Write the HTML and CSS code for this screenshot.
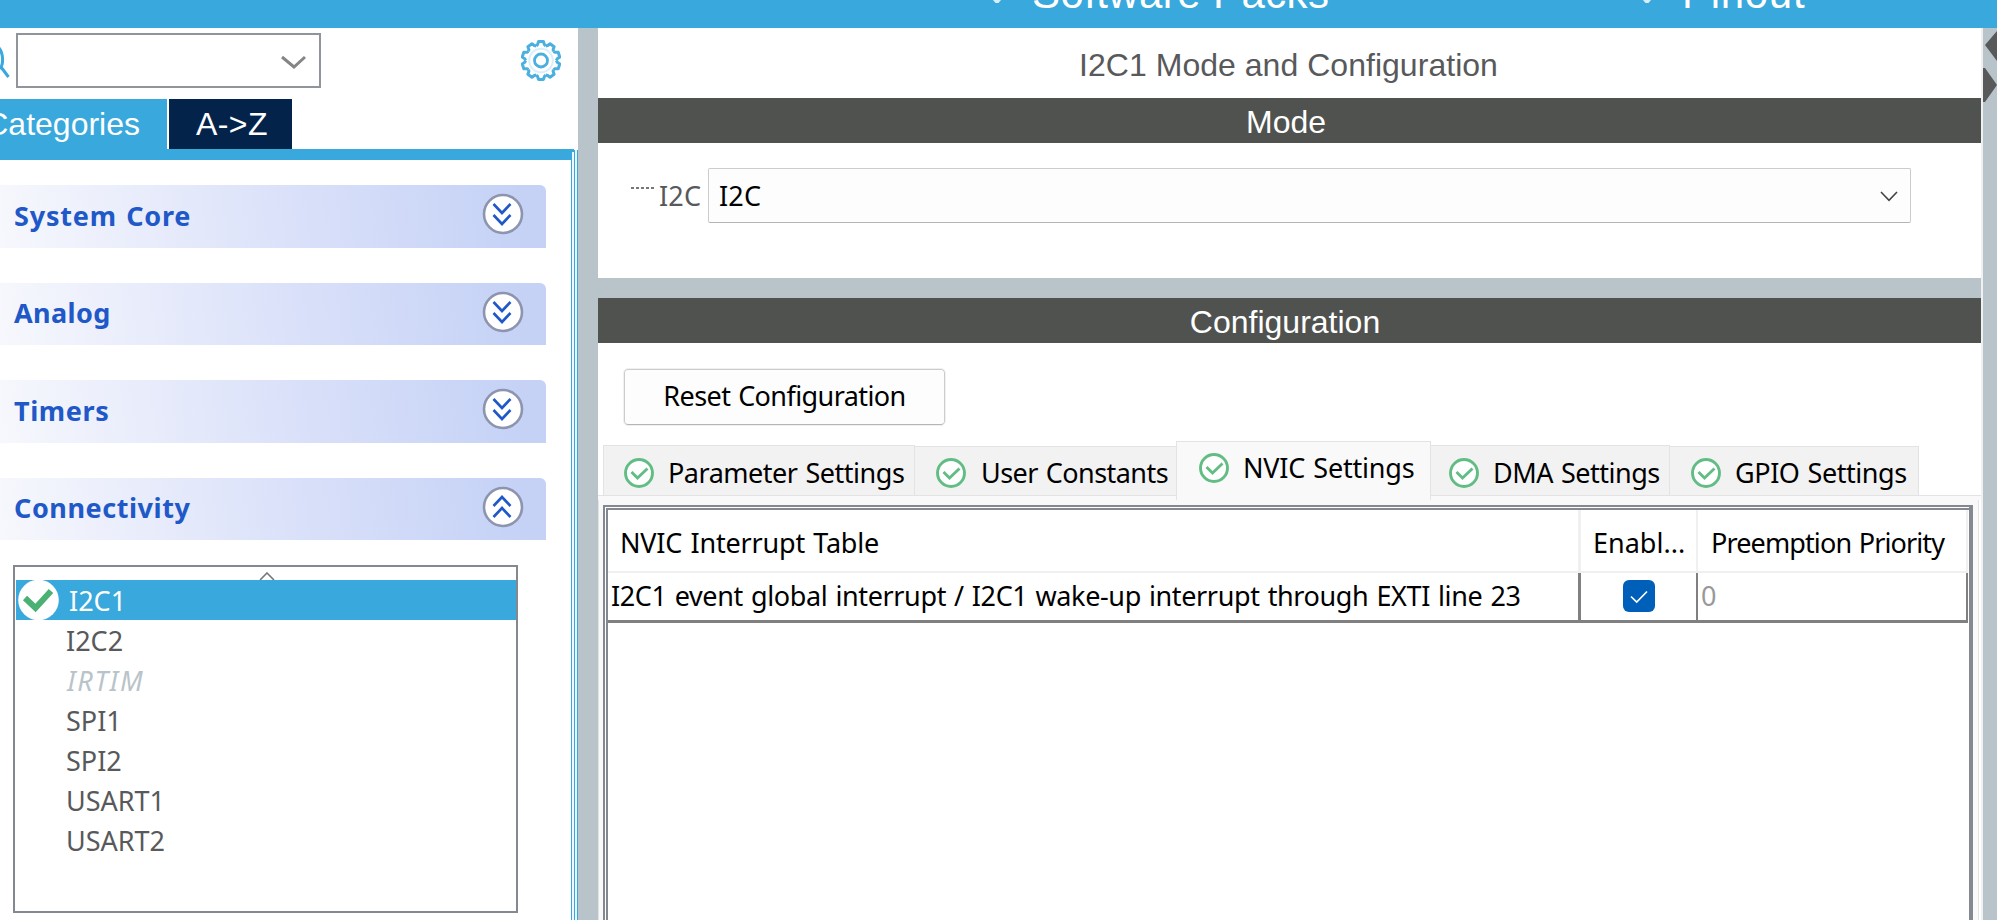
FILE: index.html
```html
<!DOCTYPE html>
<html lang="en">
<head>
<meta charset="utf-8">
<title>I2C1 Mode and Configuration</title>
<link rel="stylesheet" href="styles.css">
</head>
<body>
<svg class="defs" width="0" height="0">
  <symbol id="ok" viewBox="0 0 30 30">
    <circle cx="15" cy="15" r="13.5" fill="#fff" stroke="#62bd85" stroke-width="2.9"/>
    <path d="M7.5 14 L13.5 20 L23.5 10.5" fill="none" stroke="#62bd85" stroke-width="2.9"/>
  </symbol>
  <symbol id="down" viewBox="0 0 42 42">
    <circle cx="21" cy="21" r="19" fill="#fff" stroke="#8d94ae" stroke-width="2.6"/>
    <path d="M11.5 11 L20 20 L28.5 11 M11.5 22 L20 31 L28.5 22" fill="none" stroke="#2058c8" stroke-width="2.6"/>
  </symbol>
  <symbol id="up" viewBox="0 0 42 42">
    <circle cx="21" cy="21" r="19" fill="#fff" stroke="#8d94ae" stroke-width="2.6"/>
    <path d="M11.5 20 L20 11 L28.5 20 M11.5 31 L20 22 L28.5 31" fill="none" stroke="#2058c8" stroke-width="2.6"/>
  </symbol>
</svg>
<header class="menu">
  <div class="menu-item packs"><svg class="menu-tick" viewBox="0 0 8 4"><path d="M0 0 H8 L5.5 3 H2.5 Z" fill="#d9eef8"/></svg><span>Software Packs</span></div>
  <div class="menu-item pinout"><svg class="menu-tick" viewBox="0 0 8 4"><path d="M0 0 H8 L5.5 3 H2.5 Z" fill="#d9eef8"/></svg><span>Pinout</span></div>
</header>
<main class="body">
  <aside class="side">
    <div class="search">
      <svg class="lens" viewBox="0 0 10 40"><path d="M-1 5 C3.6 11 3.6 21 0 26 M1 24 L8.5 34" fill="none" stroke="#39a8dc" stroke-width="3"/></svg>
      <div class="search-box"><svg viewBox="0 0 26 14" class="search-chev"><path d="M2 2 L14 12 L25 2" fill="none" stroke="#858585" stroke-width="3"/></svg></div>
      <svg class="gear" viewBox="-20 -20.5 40 41" fill="none" stroke="#4bb0df">
        <g stroke-width="3" stroke-linejoin="round">
          <path id="tooth" d="M-4.73 -14.55 L-3.4 -16 L-2.5 -18.9 H2.5 L3.4 -16 L4.73 -14.55"/>
          <use href="#tooth" transform="rotate(36)"/><use href="#tooth" transform="rotate(72)"/><use href="#tooth" transform="rotate(108)"/>
          <use href="#tooth" transform="rotate(144)"/><use href="#tooth" transform="rotate(180)"/><use href="#tooth" transform="rotate(216)"/>
          <use href="#tooth" transform="rotate(252)"/><use href="#tooth" transform="rotate(288)"/><use href="#tooth" transform="rotate(324)"/>
        </g>
        <circle r="11.8" stroke-width="2" opacity=".2"/><circle r="6.5" stroke-width="2.8"/>
      </svg>
    </div>
    <nav class="modes"><div class="mode on"><span>Categories</span></div><div class="mode az"><span>A-&gt;Z</span></div></nav>
    <section class="cats">
      <div class="cat odd"><span class="t-sc">System Core</span><svg class="cat-ico"><use href="#down"/></svg></div>
      <div class="cat"><span class="t-an">Analog</span><svg class="cat-ico"><use href="#down"/></svg></div>
      <div class="cat odd"><span class="t-ti">Timers</span><svg class="cat-ico"><use href="#down"/></svg></div>
      <div class="cat"><span class="t-co">Connectivity</span><svg class="cat-ico"><use href="#up"/></svg></div>
      <div class="list">
        <div class="list-top"><svg viewBox="0 0 16 8"><path d="M1 8 L8 1 L15 8" fill="none" stroke="#777" stroke-width="1.6"/></svg></div>
        <div class="row sel"><svg class="row-ico" viewBox="0 0 41 40"><circle cx="20.5" cy="20" r="20.3" fill="#fff"/><path d="M7 18 L17.5 28 L33 11" fill="none" stroke="#4ab173" stroke-width="6"/></svg><span>I2C1</span></div>
        <div class="row"><span>I2C2</span></div>
        <div class="row off"><span>IRTIM</span></div>
        <div class="row"><span>SPI1</span></div>
        <div class="row"><span>SPI2</span></div>
        <div class="row"><span>USART1</span></div>
        <div class="row"><span>USART2</span></div>
      </div>
    </section>
  </aside>
  <section class="main">
    <h1 class="title"><span>I2C1 Mode and Configuration</span></h1>
    <h2 class="bar"><span>Mode</span></h2>
    <div class="mode-body">
      <span class="dots"></span><label class="lbl">I2C</label>
      <div class="select"><span>I2C</span><svg viewBox="0 0 18 11"><path d="M1 1 L9 9.3 L17 1" fill="none" stroke="#444" stroke-width="1.6"/></svg></div>
    </div>
    <h2 class="bar second"><span>Configuration</span></h2>
    <div class="tools"><button class="reset"><span>Reset Configuration</span></button></div>
    <div class="tabs">
      <div class="tab t1"><svg><use href="#ok"/></svg><span>Parameter Settings</span></div>
      <div class="tab t2 low"><svg><use href="#ok"/></svg><span>User Constants</span></div>
      <div class="tab t3"><svg><use href="#ok"/></svg><span>NVIC Settings</span></div>
      <div class="tab t4"><svg><use href="#ok"/></svg><span>DMA Settings</span></div>
      <div class="tab t5 low"><svg><use href="#ok"/></svg><span>GPIO Settings</span></div>
    </div>
    <div class="pane">
      <div class="frame"><div class="grid">
        <div class="h c1"><span>NVIC Interrupt Table</span></div>
        <div class="h c2"><span>Enabl...</span></div>
        <div class="h c3"><span>Preemption Priority</span></div>
        <div class="d c1"><span>I2C1 event global interrupt / I2C1 wake-up interrupt through EXTI line 23</span></div>
        <div class="d c2"><svg class="check" viewBox="0 0 32 32"><rect width="32" height="32" rx="6" fill="#005fb8"/><path d="M8 16.5 L13.7 22 L24 11.5" fill="none" stroke="#fff" stroke-width="1.7"/></svg></div>
        <div class="d c3"><span>0</span></div>
      </div></div>
    </div>
  </section>
  <div class="edge"><svg viewBox="0 0 14 80"><path d="M14 3 L2 17 L14 33 Z M0 40 H2 L14 57 L2 74 H0 Z" fill="#58595b"/></svg></div>
</main>
</body>
</html>
```
FILE: styles.css
```css
* { box-sizing: border-box; }
body { margin: 0; width: 1997px; height: 920px; overflow: hidden; background: #b8c4ca; font-family: "Noto Sans", sans-serif; font-size: 27px; color: #000; display: flex; flex-direction: column; }
svg { display: block; flex: none; }
span, label { white-space: nowrap; }
.defs { position: absolute; }
.menu { height: 28px; flex: none; background: #39a8dc; overflow: hidden; display: flex; font-family: "Liberation Sans", sans-serif; color: #fff; font-size: 42px; letter-spacing: 0.4px; line-height: 46px; }
.menu-item { display: flex; margin-top: -29px; }
.menu-tick { width: 8px; height: 4px; margin-top: 29px; }
.packs { padding-left: 993px; width: 1643px; gap: 31px; flex: none; }
.pinout { gap: 31px; letter-spacing: 0.7px; }
.body { display: flex; flex: 1; min-height: 0; }
.side { width: 578px; margin-right: 20px; flex: none; background: #fff; display: flex; flex-direction: column; overflow: hidden; }
.search { display: flex; height: 71px; flex: none; padding-top: 5px; }
.lens { width: 10px; height: 40px; margin: 10px 6px 0 0; }
.search-box { width: 305px; height: 55px; border: 2px solid #8f959b; display: flex; justify-content: flex-end; padding: 20px 13px 0 0; }
.search-chev { width: 26px; height: 14px; }
.gear { width: 40px; height: 41px; margin: 7px 0 0 200px; }
.modes { display: flex; gap: 2px; height: 50px; flex: none; font-family: "Liberation Sans", sans-serif; font-size: 32px; line-height: 50px; color: #fff; }
.mode { background: #39a8dc; width: 167px; display: flex; justify-content: flex-end; padding-right: 27px; }
.az { background: #03234b; width: 123px; justify-content: flex-start; padding: 0 0 0 27px; letter-spacing: 0.4px; }
/* The panel's right edge is a triple hairline that starts under the blue strip. */
.cats { flex: 1; padding: 36px 32px 0 0; background: linear-gradient(#39a8dc, #39a8dc) 0 0 / 571px 11px no-repeat, linear-gradient(#39a8dc, #39a8dc) 571px 0 / 3px 3px no-repeat, linear-gradient(90deg, #39a8dc 1px, #eef7fc 1px 3px, #39a8dc 3px 4px, #eef7fc 4px 6px, #39a8dc 6px) right 1px / 7px 100% no-repeat; }
.cat { width: 546px; height: 62.6px; margin-bottom: 35px; border-radius: 0 6px 0 0; background: linear-gradient(82deg, #f7f8fd, #d9e0f9 55%, #c5d2f6 95%); color: #2058c8; font-weight: bold; display: flex; justify-content: space-between; padding: 8px 22px 0 14px; line-height: 44px; }
.odd { line-height: 46px; }
.t-sc { letter-spacing: 0.82px; word-spacing: 1.4px; }
.t-an { letter-spacing: 0.4px; }
.t-ti { letter-spacing: 0.6px; }
.t-co { letter-spacing: 0.55px; }
.cat-ico { width: 42px; height: 42px; }
.list { margin: -10.4px 0 0 13px; width: 505px; height: 348px; border: 2px solid #838891; padding-left: 1px; color: #58595b; }
.list-top { height: 13px; display: flex; justify-content: center; padding: 5px 0 0 2px; }
.list-top svg { width: 16px; height: 8px; }
.row { height: 40px; line-height: 42px; padding-left: 50px; display: flex; }
.sel { background: #39a8dc; color: #fff; padding-left: 2px; gap: 10px; }
.row-ico { width: 41px; height: 40px; }
.off { color: #b8c4ca; font-style: italic; letter-spacing: 1.6px; padding-left: 51px; }
.main { width: 1383px; flex: none; background: #fff; display: flex; flex-direction: column; word-spacing: 1.4px; }
.title, .bar { margin: 0; flex: none; font: 32px "Liberation Sans", sans-serif; display: flex; justify-content: center; word-spacing: 0; }
.title { height: 70px; line-height: 74px; color: #58595b; padding-right: 2px; letter-spacing: 0.03px; }
.bar { height: 45px; line-height: 48px; background: #505250; color: #fff; padding-right: 7px; }
.mode-body { height: 135px; display: flex; padding: 25px 0 0 33px; flex: none; color: #58595b; }
.dots { width: 23px; height: 2px; margin-top: 19px; background: repeating-linear-gradient(90deg, #777 0 3px, #fff 3px 5px); }
.lbl { width: 54px; padding-left: 5px; line-height: 55px; letter-spacing: 0.2px; }
.select { width: 1203px; height: 55px; border: 1px solid #ccc; border-bottom-color: #b5b5b5; border-radius: 2px; color: #000; background: #fdfdfd; display: flex; justify-content: space-between; padding: 0 12px 0 10px; line-height: 53px; letter-spacing: 0.2px; }
.select svg { width: 18px; height: 11px; margin-top: 22px; }
.second { border-top: 20px solid #b8c4ca; height: 65px; padding-right: 9px; }
.tools { height: 98px; flex: none; padding: 26px 0 0 26px; }
.reset { display: block; width: 321px; height: 56px; border: 1px solid #ccc; border-bottom-color: #b5b5b5; outline: 1px solid #f0f0f0; border-radius: 4px; background: #fdfdfd; font: inherit; word-spacing: 1.4px; letter-spacing: -0.58px; padding: 0 0 2px; line-height: 52px; }
.tabs { height: 59px; flex: none; display: flex; padding-left: 5px; align-items: flex-start; background: linear-gradient(#fff 54px, #e3e3e3 54px 55px, #f9f9f9 55px) no-repeat; }
.tab { height: 51px; margin-top: 4px; border: 1px solid #e3e3e3; border-right: 0; background: #f2f2f2; display: flex; padding: 12px 0 0 20px; line-height: 30px; }
.tab svg { width: 30px; height: 30px; }
.low { margin-top: 5px; height: 50px; padding-top: 11px; border-left: 0; padding-left: 21px; }
.t1 { width: 312px; gap: 14px; letter-spacing: -0.48px; border-right: 1px solid #e3e3e3; }
.t2 { width: 261px; gap: 15px; letter-spacing: -0.55px; }
.t3 { width: 255px; margin-top: 0; height: 59px; padding-top: 11px; padding-left: 22px; gap: 14px; letter-spacing: -0.2px; background: #f9f9f9; border-bottom: 0; border-right: 1px solid #e3e3e3; }
.t4 { width: 239px; padding-left: 18px; gap: 14px; letter-spacing: -0.49px; border-left: 0; border-right: 1px solid #e3e3e3; }
.t5 { width: 249px; gap: 14px; letter-spacing: -0.43px; border-right: 1px solid #e3e3e3; }
.pane { flex: 1; min-height: 0; margin-right: 2px; border: solid #e3e3e3; border-width: 0 1px; background: #f9f9f9; padding: 5px 5px 0 4px; }
.frame { height: 440px; border: 2px solid #838891; padding: 1px 0 0 1px; background: #fff; border-right-width: 4px; }
.grid { height: 430px; border: solid #838891; border-width: 2px 0 0 2px; display: grid; grid-template-columns: 973px 117px 270px; grid-template-rows: 63px 50px; }
.h { border-right: 3px solid #f0f0f0; border-bottom: 2px solid #f0f0f0; padding-left: 12px; line-height: 65px; }
.h.c1 { letter-spacing: -0.18px; }
.h.c3 { letter-spacing: -0.88px; padding-left: 13px; }
.d { border-right: 3px solid #808080; border-bottom: 3px solid #808080; padding-left: 3px; line-height: 45px; }
.d.c1 { letter-spacing: -0.37px; }
.c2, .c3 { border-right-width: 2px; }
.d.c2 { padding: 7px 0 0 42px; }
.check { width: 32px; height: 32px; }
.d.c3 { color: #999; padding-left: 3px; }
.edge { width: 16px; border-left: 2px solid #f0f0f0; }
.edge svg { width: 14px; height: 80px; }
```
